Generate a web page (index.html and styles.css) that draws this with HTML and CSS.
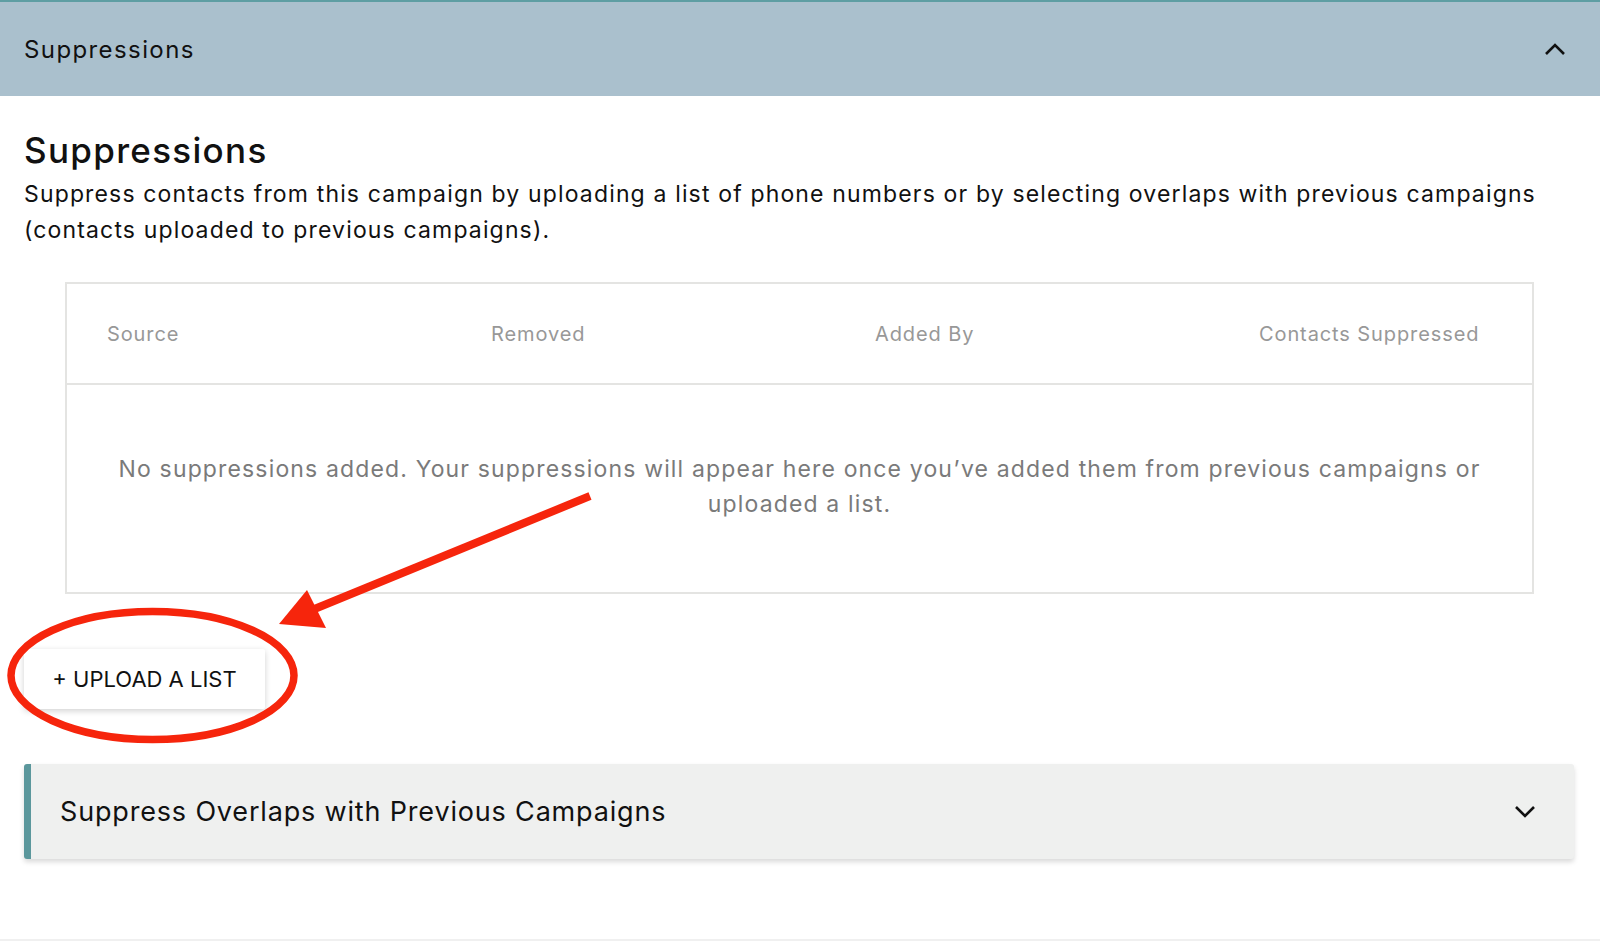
FILE: index.html
```html
<!DOCTYPE html>
<html lang="en">
<head>
<meta charset="utf-8">
<title>Suppressions</title>
<link rel="stylesheet" href="styles.css">
</head>
<body>
<div class="page">
  <header class="topbar">
    <span class="topbar-title">Suppressions</span>
    <svg class="chev" width="22" height="14" viewBox="0 0 22 14"><path d="M2 12 L11 3 L20 12" fill="none" stroke="#111" stroke-width="2.6"/></svg>
  </header>
  <main class="content">
    <h1 class="title">Suppressions</h1>
    <p class="desc">Suppress contacts from this campaign by uploading a list of phone numbers or by selecting overlaps with previous campaigns (contacts uploaded to previous campaigns).</p>
    <div class="table">
      <div class="thead">
        <span>Source</span>
        <span>Removed</span>
        <span>Added By</span>
        <span>Contacts Suppressed</span>
      </div>
      <div class="tbody">
        <p class="empty">No suppressions added. Your suppressions will appear here once you’ve added them from previous campaigns or uploaded a list.</p>
      </div>
    </div>
    <div class="actions">
      <button class="upload">+ UPLOAD A LIST</button>
    </div>
    <section class="accordion">
      <span class="acc-title">Suppress Overlaps with Previous Campaigns</span>
      <svg class="chev" width="22" height="14" viewBox="0 0 22 14"><path d="M2 2 L11 11 L20 2" fill="none" stroke="#111" stroke-width="2.6"/></svg>
    </section>
  </main>
  <svg class="annot" width="1600" height="941" viewBox="0 0 1600 941">
    <ellipse cx="152.5" cy="675.5" rx="141.5" ry="64" fill="none" stroke="#f6250c" stroke-width="7.5"/>
    <line x1="590" y1="496" x2="312" y2="610" stroke="#f6250c" stroke-width="8"/>
    <polygon points="279,624 307,590 326,628" fill="#f6250c"/>
  </svg>
</div>
</body>
</html>
```
FILE: styles.css
```css
* { box-sizing: border-box; }
html, body { margin: 0; padding: 0; background: #fff; }
body { font-family: Inter, "Open Sans", sans-serif; color: #111; }
.page { position: relative; width: 1600px; height: 941px; overflow: hidden; border-bottom: 2px solid #f0f0f0; }
.topbar {
  height: 96px;
  background: #aac0cd;
  border-top: 2px solid #5e9ea3;
  padding: 0 34px 0 24px;
  display: flex;
  align-items: center;
  justify-content: space-between;
}
.topbar-title { font-size: 24px; letter-spacing: 1.4px; }
.content { padding: 0 26px 0 24px; }
.title { margin: 30px 0 0; font-size: 35px; font-weight: 500; line-height: 48px; letter-spacing: 1.3px; }
.desc { margin: 3px 0 0; font-size: 23px; line-height: 35.5px; letter-spacing: 1.15px; color: #111; }
.table {
  margin: 34px 40px 0 41px;
  border: 2px solid #e4e4e2;
}
.thead {
  height: 101px;
  border-bottom: 2px solid #e4e4e2;
  display: grid;
  grid-template-columns: 384px 384px 384px auto;
  align-items: center;
  padding-left: 40px;
  font-size: 20px;
  letter-spacing: 0.9px;
  color: #989898;
}
.tbody {
  height: 207px;
  display: flex;
  align-items: center;
  justify-content: center;
  padding: 0 40px 3px;
}
.empty { margin: 0; text-align: center; font-size: 23px; line-height: 35.5px; letter-spacing: 1.15px; color: #7a7a7a; }
.actions { margin-top: 55px; }
.upload {
  width: 241px;
  height: 60px;
  border: none;
  background: #fff;
  font-family: inherit;
  font-size: 22px;
  color: #111;
  box-shadow: 0 2px 6px rgba(0,0,0,0.18);
  border-radius: 2px;
}
.accordion {
  margin-top: 55px;
  height: 95px;
  background: #eff0ef;
  border-left: 7px solid #5b979c;
  border-radius: 3px;
  box-shadow: 0 3px 5px rgba(0,0,0,0.15);
  display: flex;
  align-items: center;
  justify-content: space-between;
  padding: 0 38px 0 29px;
}
.acc-title { font-size: 27px; letter-spacing: 0.83px; }
.annot { position: absolute; left: 0; top: 0; pointer-events: none; }
```
